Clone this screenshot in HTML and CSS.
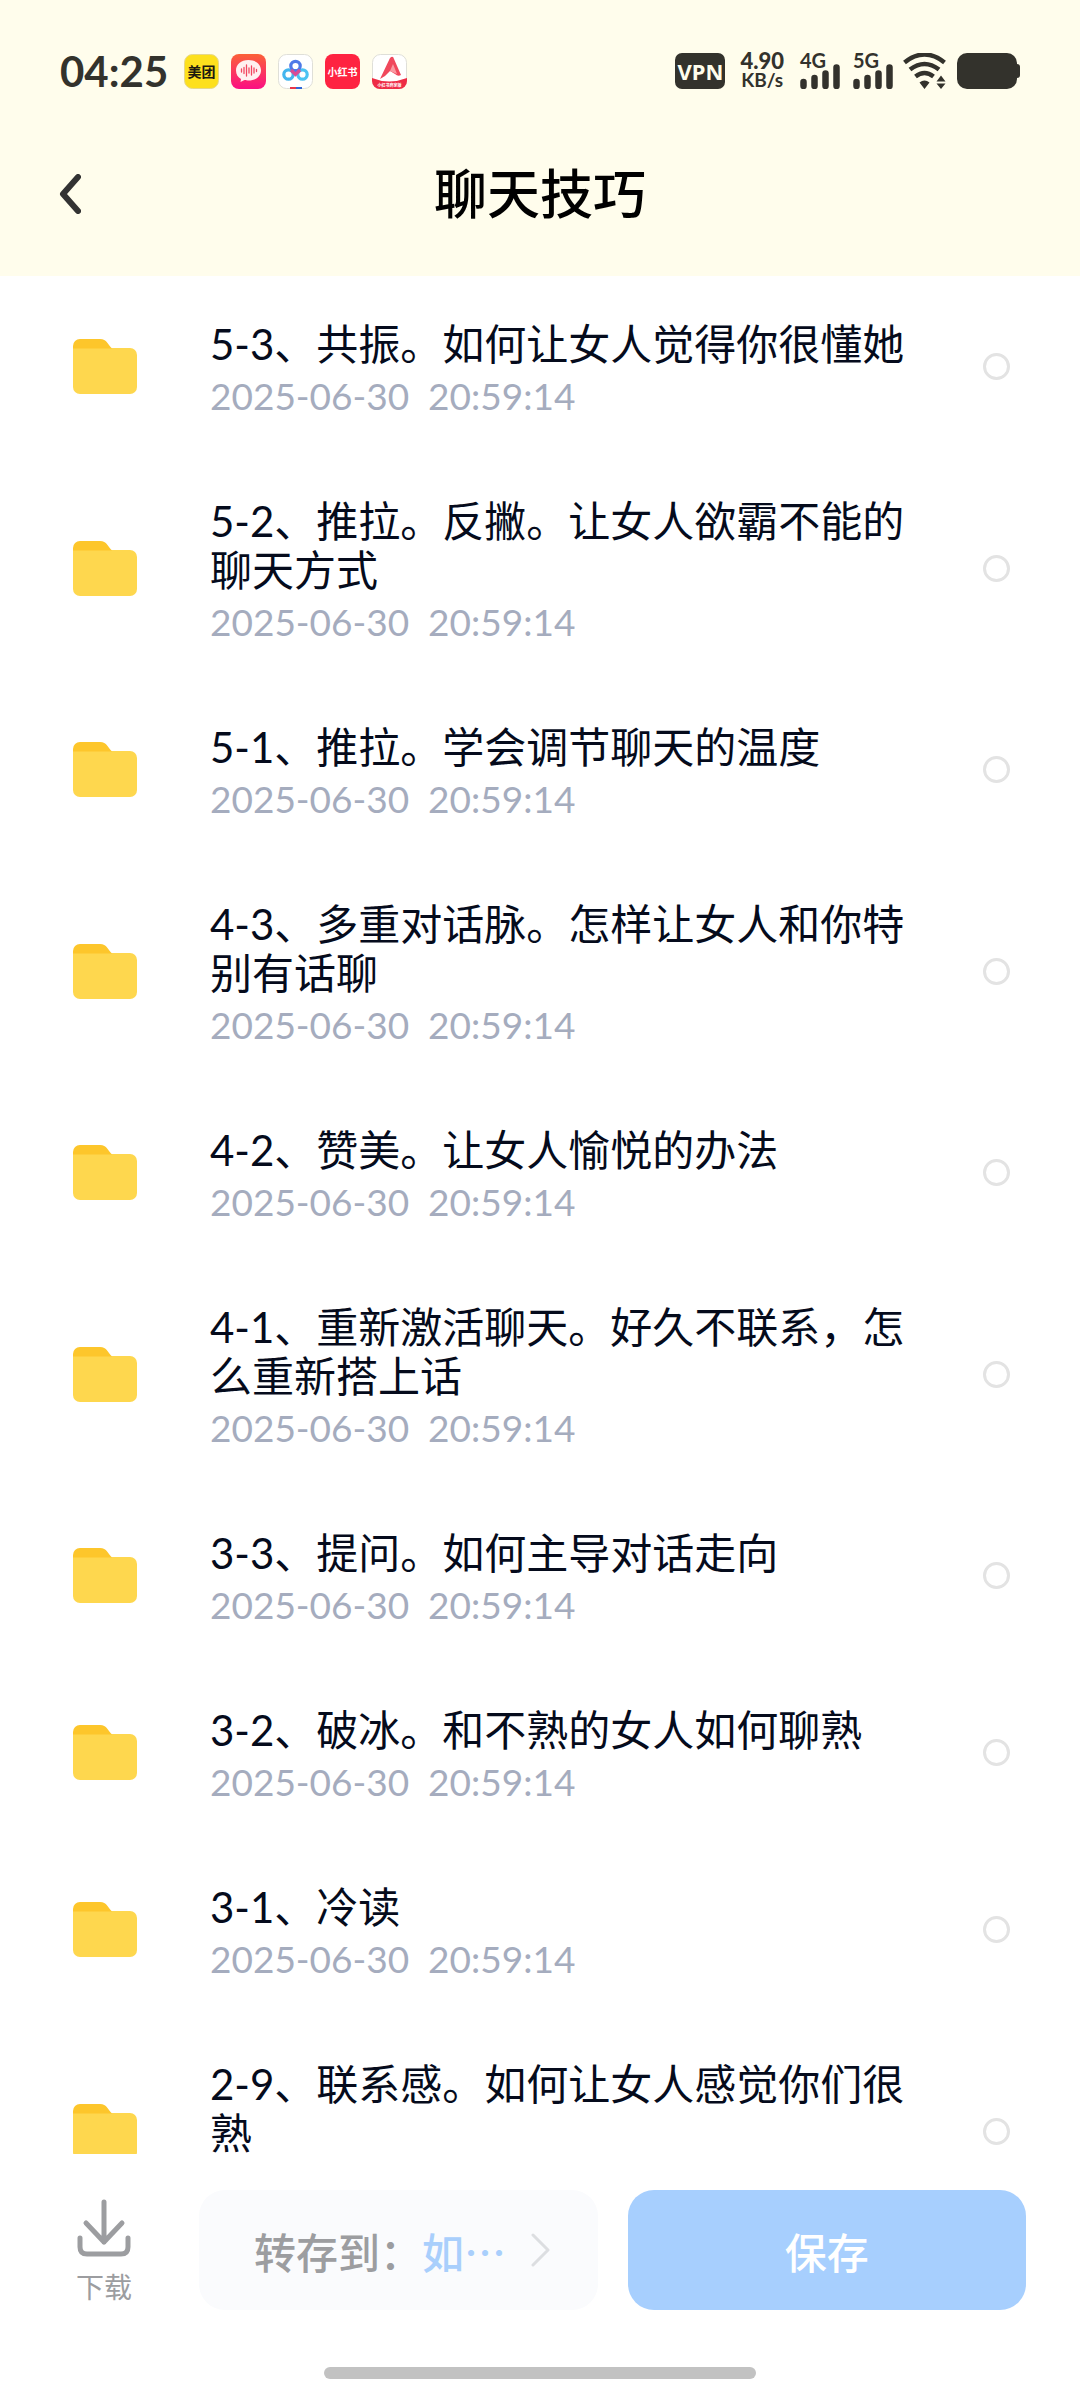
FILE: index.html
```html
<!DOCTYPE html>
<html lang="zh-CN">
<head>
    <meta charset="UTF-8">
    <meta name="viewport" content="width=device-width, initial-scale=1.0">
    <title>聊天技巧</title>
    <link rel="stylesheet" href="styles.css">
</head>
<body>
    <!-- Shared folder icon -->
    <svg class="defs" width="0" height="0" aria-hidden="true">
        <symbol id="folder" viewBox="0 0 64 55">
            <path d="M0 9h57a7 7 0 0 1 7 7v32a7 7 0 0 1-7 7H7a7 7 0 0 1-7-7z" fill="#fed74e"/>
            <path d="M0 9.500V7a7 7 0 0 1 7-7h20c7 0 8 6 12 9.500z" fill="#fdc62b"/>
        </symbol>
    </svg>

    <header>
        <div class="status-bar">
            <div class="status-left">
                <span class="clock">04:25</span>
                <div class="apps">
                    <svg viewBox="0 0 35 35">
                        <rect x=".5" y=".5" width="34" height="34" rx="8" fill="#fde01d" stroke="#e6d88a"/>
                        <text x="17.500" y="23" class="app-text" font-size="14" fill="#1d1a10">美团</text>
                    </svg>
                    <svg viewBox="0 0 35 35">
                        <defs>
                            <linearGradient id="voice" x1="0" y1="0" x2="0" y2="1">
                                <stop offset="0" stop-color="#fb6138"/>
                                <stop offset="1" stop-color="#fb0f83"/>
                            </linearGradient>
                        </defs>
                        <rect width="35" height="35" rx="8" fill="url(#voice)"/>
                        <path d="M17.500 6C10 6 5 10.500 5 16.500c0 4 2 7 5 8.500l-.5 3 4-2c1 .3 3 .5 4 .5 7 0 12.500-4 12.500-10S25 6 17.500 6z" fill="#fff0f0"/>
                        <path d="M10.500 15v3M13 13.500v6M15.500 11v11M18 14v5M20.500 12v9M23 14v5M25.500 15.500v2" stroke="#f24660" stroke-width="1.300" stroke-linecap="round"/>
                    </svg>
                    <svg viewBox="0 0 35 35">
                        <rect x=".5" y=".5" width="34" height="34" rx="8" fill="#fff" stroke="#dfdfd8"/>
                        <g fill="none" stroke-width="3.200">
                            <circle cx="10.500" cy="20.500" r="4.700" stroke="#43b5ee"/>
                            <circle cx="24.500" cy="20.500" r="4.700" stroke="#4bc3f2"/>
                            <circle cx="17.500" cy="12" r="4.700" stroke="#4d79e8"/>
                            <path d="M13 16l4.500 4.500L22 16" stroke="#d94c94"/>
                        </g>
                        <path d="M12 33h6v2h-6z" fill="#e8364a"/>
                        <path d="M18 33h6v2h-6z" fill="#2f66d8"/>
                    </svg>
                    <svg viewBox="0 0 35 35">
                        <rect width="35" height="35" rx="8" fill="#fe2341"/>
                        <text x="17.500" y="22" class="app-text" font-size="10" fill="#fff">小红书</text>
                    </svg>
                    <svg viewBox="0 0 35 35">
                        <defs>
                            <clipPath id="tile"><rect width="35" height="35" rx="8"/></clipPath>
                        </defs>
                        <rect x=".5" y=".5" width="34" height="34" rx="8" fill="#fff" stroke="#dfdfd8"/>
                        <g clip-path="url(#tile)">
                            <path d="M8 25L18 4q3-3 4 1l7 16q-3 2-6-1l-5-3q-4 5-10 8z" fill="#f0485c"/>
                            <path d="M18 17l3-7 4 10z" fill="#fa9aa2"/>
                            <path d="M0 24q17 7 35 0v11H0z" fill="#ee2c45"/>
                            <text x="17.500" y="33" class="app-text" font-size="4" fill="#fff">小红书商家版</text>
                        </g>
                    </svg>
                </div>
            </div>
            <div class="status-right">
                <span class="vpn">VPN</span>
                <span class="speed"><b>4.90</b><small>KB/s</small></span>
                <span class="signal">
                    <b>4G</b>
                    <svg viewBox="0 0 40 25"><path d="M3.500 18v4M14.500 14v8M25.500 9.500v12.500M36.500 3.500v18.500" stroke="#33322c" stroke-width="6.500" stroke-linecap="round"/></svg>
                </span>
                <span class="signal">
                    <b>5G</b>
                    <svg viewBox="0 0 40 25"><path d="M3.500 18v4M14.500 14v8M25.500 9.500v12.500M36.500 3.500v18.500" stroke="#33322c" stroke-width="6.500" stroke-linecap="round"/></svg>
                </span>
                <svg class="wifi" viewBox="0 0 44 36">
                    <path d="M1.500 9.500Q21.500-6.500 41.500 9.500M7 16.500Q21.500 5.500 36 16.500M12.500 23.500Q21.500 16.500 30.500 23.500" fill="none" stroke="#33322c" stroke-width="4.500"/>
                    <path d="M16.500 29.500q5-4 10 0L21.500 36zM33.500 28.500l4.500-6 4.500 6zM33.500 30.500h9L38 36z" fill="#33322c"/>
                </svg>
                <svg class="battery" viewBox="0 0 63 36">
                    <rect width="60" height="36" rx="10" fill="#33322c"/>
                    <rect x="56" y="11" width="7" height="14" rx="3" fill="#33322c"/>
                </svg>
            </div>
        </div>

        <div class="title-bar">
            <button class="back" type="button" aria-label="返回">
                <svg viewBox="0 0 22 40"><path d="M19 3L4 20l15 17" fill="none" stroke="#333" stroke-width="6" stroke-linecap="round" stroke-linejoin="round"/></svg>
            </button>
            <h1>聊天技巧</h1>
        </div>
    </header>

    <!-- Folder list -->
    <main class="list">
        <label class="row">
            <svg class="folder"><use href="#folder"/></svg>
            <span class="info">
                <span class="name">5-3、共振。如何让女人觉得你很懂她</span>
                <span class="date">2025-06-30&nbsp; 20:59:14</span>
            </span>
            <input type="checkbox">
        </label>
        <label class="row">
            <svg class="folder"><use href="#folder"/></svg>
            <span class="info">
                <span class="name">5-2、推拉。反撇。让女人欲霸不能的聊天方式</span>
                <span class="date">2025-06-30&nbsp; 20:59:14</span>
            </span>
            <input type="checkbox">
        </label>
        <label class="row">
            <svg class="folder"><use href="#folder"/></svg>
            <span class="info">
                <span class="name">5-1、推拉。学会调节聊天的温度</span>
                <span class="date">2025-06-30&nbsp; 20:59:14</span>
            </span>
            <input type="checkbox">
        </label>
        <label class="row">
            <svg class="folder"><use href="#folder"/></svg>
            <span class="info">
                <span class="name">4-3、多重对话脉。怎样让女人和你特别有话聊</span>
                <span class="date">2025-06-30&nbsp; 20:59:14</span>
            </span>
            <input type="checkbox">
        </label>
        <label class="row">
            <svg class="folder"><use href="#folder"/></svg>
            <span class="info">
                <span class="name">4-2、赞美。让女人愉悦的办法</span>
                <span class="date">2025-06-30&nbsp; 20:59:14</span>
            </span>
            <input type="checkbox">
        </label>
        <label class="row">
            <svg class="folder"><use href="#folder"/></svg>
            <span class="info">
                <span class="name">4-1、重新激活聊天。好久不联系，怎么重新搭上话</span>
                <span class="date">2025-06-30&nbsp; 20:59:14</span>
            </span>
            <input type="checkbox">
        </label>
        <label class="row">
            <svg class="folder"><use href="#folder"/></svg>
            <span class="info">
                <span class="name">3-3、提问。如何主导对话走向</span>
                <span class="date">2025-06-30&nbsp; 20:59:14</span>
            </span>
            <input type="checkbox">
        </label>
        <label class="row">
            <svg class="folder"><use href="#folder"/></svg>
            <span class="info">
                <span class="name">3-2、破冰。和不熟的女人如何聊熟</span>
                <span class="date">2025-06-30&nbsp; 20:59:14</span>
            </span>
            <input type="checkbox">
        </label>
        <label class="row">
            <svg class="folder"><use href="#folder"/></svg>
            <span class="info">
                <span class="name">3-1、冷读</span>
                <span class="date">2025-06-30&nbsp; 20:59:14</span>
            </span>
            <input type="checkbox">
        </label>
        <label class="row">
            <svg class="folder"><use href="#folder"/></svg>
            <span class="info">
                <span class="name">2-9、联系感。如何让女人感觉你们很熟</span>
                <span class="date">2025-06-30&nbsp; 20:59:14</span>
            </span>
            <input type="checkbox">
        </label>
    </main>

    <!-- Bottom actions -->
    <footer>
        <div class="actions">
            <button class="download" type="button">
                <svg viewBox="0 0 54 58"><path d="M27 3v40M9 24l18 19 18-19M3 39v9q0 7 7 7h34q7 0 7-7v-9" fill="none" stroke="#9c9da0" stroke-width="5" stroke-linecap="round" stroke-linejoin="round"/></svg>
                下载
            </button>
            <div class="buttons">
                <button class="btn target" type="button">
                    <span>转存到：<em>如…</em></span>
                    <svg viewBox="0 0 20 34"><path d="M2 2l15 15L2 32" fill="none" stroke="#dcdee1" stroke-width="3" stroke-linecap="round" stroke-linejoin="round"/></svg>
                </button>
                <button class="btn save" type="button">保存</button>
            </div>
        </div>
        <div class="home-indicator"></div>
    </footer>
</body>
</html>
```

FILE: styles.css
```css
* {
    box-sizing: border-box;
}

body {
    display: flex;
    flex-direction: column;
    height: 100vh;
    margin: 0;
    background-color: #fff;
    color: #050b1c;
    font-family: Lato, "Noto Sans CJK SC", sans-serif;
}

button {
    padding: 0;
    border: none;
    background: none;
    font-family: inherit;
    cursor: pointer;
}

svg {
    display: block;
    flex: none;
}

.defs {
    position: absolute;
}

header {
    flex: none;
    background-color: #fffdec;
}

/* Status bar */
.status-bar {
    display: flex;
    justify-content: space-between;
    height: 112px;
    padding: 53px 60px 23px;
    color: #33322c;
}

.status-left, .status-right, .apps {
    display: flex;
    align-items: center;
}

.status-left {
    gap: 16px;
}

.status-right {
    gap: 10px;
}

.apps {
    gap: 12px;
}

.apps svg {
    width: 35px;
    height: 35px;
}

.app-text {
    font-family: "Noto Sans CJK SC", sans-serif;
    font-weight: 700;
    text-anchor: middle;
}

.clock {
    font-size: 42px;
    font-weight: 700;
    line-height: 36px;
}

.vpn {
    width: 50px;
    margin-right: 5px;
    border-radius: 7px;
    background-color: #33322c;
    color: #fffdec;
    font-family: "Noto Sans", sans-serif;
    font-size: 22px;
    font-weight: 700;
    line-height: 36px;
    text-align: center;
}

.speed {
    display: flex;
    flex-direction: column;
    align-items: center;
    margin-right: 6px;
    font-weight: 700;
}

.speed b {
    font-size: 22px;
    line-height: 18px;
}

.speed small {
    font-size: 19px;
    line-height: 20px;
}

.signal {
    display: flex;
    flex-direction: column;
    height: 36px;
}

.signal + .signal {
    margin-left: 3px;
}

.signal b {
    height: 11px;
    font-size: 20px;
    line-height: 14px;
}

.signal svg {
    width: 40px;
    height: 25px;
}

.wifi {
    width: 44px;
    height: 36px;
}

.battery {
    width: 63px;
    height: 36px;
}

/* Title bar */
.title-bar {
    display: grid;
    grid-template-columns: 1fr auto 1fr;
    align-items: center;
    height: 164px;
    padding: 0 59px;
}

.back svg {
    width: 22px;
    height: 40px;
}

h1 {
    margin: 0;
    color: #000;
    font-size: 53px;
    font-weight: 500;
    line-height: 60px;
}

/* List */
.list {
    flex: 1;
    min-height: 0;
    padding-top: 2px;
    overflow: hidden;
}

.row {
    display: flex;
    align-items: center;
    padding: 0 70px 0 73px;
}

.folder {
    width: 64px;
    height: 55px;
}

.info {
    flex: 1;
    padding: 42px 60px 37px 73px;
}

.name, .date {
    display: block;
}

.name {
    font-size: 42px;
    line-height: 49px;
}

.date {
    margin-top: 5px;
    color: #a5acbe;
    font-size: 37px;
    line-height: 44px;
}

.row input {
    appearance: none;
    flex: none;
    width: 27px;
    height: 27px;
    margin: 0;
    border: 3px solid #e3e3e3;
    border-radius: 50%;
}

.row input:checked {
    border-color: #4d9eff;
    background-color: #4d9eff;
}

/* Bottom bar */
footer {
    flex: none;
    padding: 36px 54px 21px;
}

.actions {
    display: flex;
    align-items: center;
    gap: 45px;
}

.download {
    display: flex;
    flex-direction: column;
    align-items: center;
    gap: 12px;
    width: 100px;
    padding-top: 3px;
    color: #9c9da0;
    font-size: 28px;
    line-height: 36px;
}

.download svg {
    width: 54px;
    height: 58px;
}

.buttons {
    display: grid;
    flex: 1;
    grid-template-columns: 1fr 1fr;
    gap: 30px;
}

.btn {
    height: 120px;
    border-radius: 26px;
    font-size: 42px;
    font-weight: 500;
}

.target {
    display: flex;
    align-items: center;
    justify-content: space-between;
    padding: 0 47px 0 55px;
    background-color: #fafbfd;
    color: #9c9da0;
}

.target em {
    color: #a9cffc;
    font-style: normal;
    font-family: "Noto Sans CJK SC", sans-serif;
}

.target svg {
    width: 20px;
    height: 34px;
}

.save {
    background-color: #a7cffe;
    color: #fff;
}

.home-indicator {
    width: 432px;
    max-width: 50%;
    height: 12px;
    margin: 57px auto 0;
    border-radius: 6px;
    background-color: #c2c2c2;
}
```
